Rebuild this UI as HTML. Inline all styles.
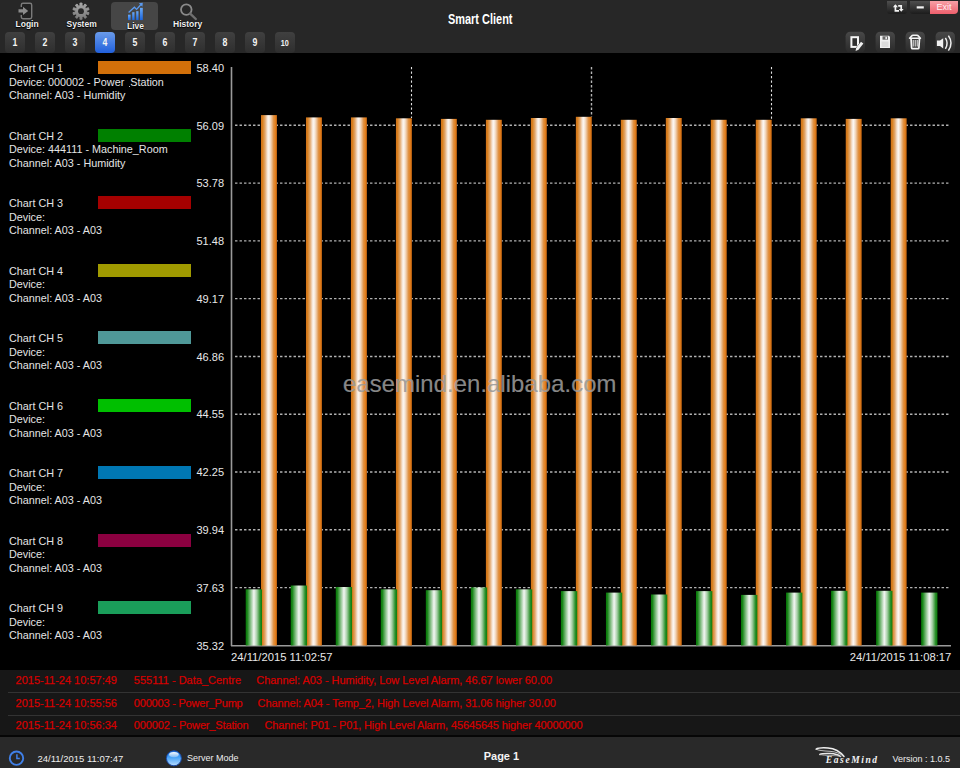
<!DOCTYPE html>
<html><head><meta charset="utf-8">
<style>
html,body{margin:0;padding:0;}
body{width:960px;height:768px;overflow:hidden;background:#000;position:relative;font-family:"Liberation Sans",sans-serif;color:#e6e6e6;}
.abs{position:absolute;}
#hdr{position:absolute;left:0;top:0;width:960px;height:52.6px;background:#272727;}
.tab{position:absolute;top:19px;font-size:8.5px;font-weight:bold;color:#f0f0f0;text-shadow:0 0 1px #000,0 1px 1px #000;white-space:nowrap;}
#livebg{position:absolute;left:111px;top:1.5px;width:47px;height:28px;background:#464646;border-radius:4px;}
.nb{position:absolute;top:32px;width:20px;height:20.5px;border-radius:4px;background:linear-gradient(#404040,#2e2e2e);color:#f4f4f4;font-size:10.3px;font-weight:bold;text-align:center;line-height:21.5px;}
.us{color:transparent;position:relative;}
.us::after{content:'';position:absolute;left:4.5px;top:10.3px;width:1.2px;height:1.2px;background:#bbb;}
.dg{display:inline-block;transform:scaleX(0.85);}
.nb.sel{background:linear-gradient(#6a9be9,#2160dc);}
#title{position:absolute;left:447.5px;top:10.4px;font-size:15.5px;font-weight:bold;color:#fff;transform:scaleX(0.706);transform-origin:0 0;white-space:nowrap;}
.sw{position:absolute;left:97.5px;width:93.5px;height:13.3px;}
.lt{position:absolute;left:9px;font-size:10.8px;line-height:13.5px;color:#e4e4e4;white-space:nowrap;}
#chart{position:absolute;left:0;top:0;}
#chart text{font-family:"Liberation Sans",sans-serif;font-size:11px;fill:#e8e8e8;}
.gd{stroke:#b4b4b4;stroke-width:1.4;stroke-dasharray:2.4 2.1;}
.gv{stroke:#e0e0e0;stroke-width:1.1;stroke-dasharray:2.2 2.3;}
#alarm{position:absolute;left:0;top:670px;width:960px;height:65px;background:#171717;}
.sep{position:absolute;left:8px;width:952px;height:1px;background:#333;}
.ar{position:absolute;font-size:11px;color:#dc0000;white-space:nowrap;-webkit-text-stroke:0.25px #c80000;}
#status{position:absolute;left:0;top:736.5px;width:960px;height:31px;background:#292929;}
#wm{position:absolute;left:343px;top:370.2px;font-size:24px;color:rgba(150,150,150,0.85);white-space:nowrap;text-shadow:-0.4px -0.4px 0 rgba(230,230,230,0.25);}
</style></head><body>
<div id="hdr"></div>
<div id="livebg"></div>
<svg class="abs" style="left:0;top:0" width="220" height="30">
  <defs>
    <linearGradient id="bl" x1="0" y1="0" x2="0" y2="1"><stop offset="0" stop-color="#6aaaf8"/><stop offset="1" stop-color="#1a66e0"/></linearGradient>
    <linearGradient id="gr" gradientUnits="userSpaceOnUse" x1="0" y1="-8" x2="0" y2="8"><stop offset="0" stop-color="#a8a8a8"/><stop offset="1" stop-color="#7a7a7a"/></linearGradient>
  </defs>
  <rect x="22" y="4" width="9" height="14" fill="#222"/><path d="M21.3 7 V5 Q21.3 3.3 23 3.3 H30 Q31.7 3.3 31.7 5 V17 Q31.7 18.7 30 18.7 H23 Q21.3 18.7 21.3 17 V15" fill="none" stroke="#7a7a7a" stroke-width="1.4"/>
  <path d="M18.5 9.3 H23 V6.8 L28.2 10.9 L23 15 V12.6 H18.5 Z" fill="#8c8c8c"/>
  <g transform="translate(81,11.2)">
    <g fill="url(#gr)">
    <path d="M-1.01 -5.51 L-1.08 -8.13 L1.08 -8.13 L1.01 -5.51 L2.42 -5.05 L3.91 -7.21 L5.65 -5.94 L4.06 -3.86 L4.92 -2.67 L7.40 -3.54 L8.06 -1.49 L5.55 -0.74 L5.55 0.74 L8.06 1.49 L7.40 3.54 L4.92 2.67 L4.06 3.86 L5.65 5.94 L3.91 7.21 L2.42 5.05 L1.01 5.51 L1.08 8.13 L-1.08 8.13 L-1.01 5.51 L-2.42 5.05 L-3.91 7.21 L-5.65 5.94 L-4.06 3.86 L-4.92 2.67 L-7.40 3.54 L-8.06 1.49 L-5.55 0.74 L-5.55 -0.74 L-8.06 -1.49 L-7.40 -3.54 L-4.92 -2.67 L-4.06 -3.86 L-5.65 -5.94 L-3.91 -7.21 L-2.42 -5.05 Z" stroke="url(#gr)" stroke-width="0.9" stroke-linejoin="round"/>
    </g>
    <circle r="2.9" fill="#2a2a2a"/>
  </g>
  <rect x="128" y="14.7" width="2.6" height="5.4" fill="url(#bl)"/>
  <rect x="132.2" y="12.2" width="2.3" height="7.9" fill="url(#bl)"/>
  <rect x="136.2" y="11.2" width="2.3" height="8.9" fill="url(#bl)"/>
  <rect x="140" y="7.8" width="2.8" height="12.3" fill="url(#bl)"/>
  <path d="M128.6 12.5 L134.4 7.2 L136.6 9.4 L141 4.5" fill="none" stroke="#5a9af0" stroke-width="1.3"/>
  <path d="M138.8 3.2 L142.8 2.8 L142.4 6.8 Z" fill="#5a9af0"/>
  <circle cx="186.3" cy="9.6" r="5.3" fill="none" stroke="#8a8a8a" stroke-width="1.8"/>
  <path d="M190.2 13.6 L195.8 19" stroke="#6f6f6f" stroke-width="2.4" stroke-linecap="round"/>
</svg>
<div class="tab" style="left:15.5px">Login</div>
<div class="tab" style="left:66.5px">System</div>
<div class="tab" style="left:127px;top:20.7px">Live</div>
<div class="tab" style="left:173px">History</div>
<div class="nb" style="left:5px"><span class="dg">1</span></div>
<div class="nb" style="left:35px"><span class="dg">2</span></div>
<div class="nb" style="left:65px"><span class="dg">3</span></div>
<div class="nb sel" style="left:95px"><span class="dg">4</span></div>
<div class="nb" style="left:125px"><span class="dg">5</span></div>
<div class="nb" style="left:155px"><span class="dg">6</span></div>
<div class="nb" style="left:185px"><span class="dg">7</span></div>
<div class="nb" style="left:215px"><span class="dg">8</span></div>
<div class="nb" style="left:245px"><span class="dg">9</span></div>
<div class="nb" style="left:275px"><span class="dg" style="font-size:8.5px">10</span></div>
<div id="title">Smart Client</div>
<div class="abs" style="left:887px;top:1px;width:20px;height:12.5px;background:linear-gradient(#4e4e4e,#1c1c1c);border-radius:0 0 3px 3px;"></div>
<div class="abs" style="left:910px;top:1px;width:20px;height:12.5px;background:linear-gradient(#4e4e4e,#1c1c1c);border-radius:0 0 0 3px;"></div>
<div class="abs" style="left:930px;top:1px;width:28px;height:13.2px;background:linear-gradient(#f7a0a6,#ee5f6c);border-radius:0 0 4px 0;color:#fff0f2;font-size:9px;line-height:13px;text-align:center;">Exit</div>
<svg class="abs" style="left:887px;top:1px" width="71" height="14">
  <path d="M8.4 4.3 V9.8 H12" fill="none" stroke="#f2f2f2" stroke-width="1.7"/>
  <path d="M5.9 6.3 L8.4 3.2 L10.9 6.3 Z" fill="#f2f2f2"/>
  <path d="M11.2 4.9 H14.2 V8.6" fill="none" stroke="#f2f2f2" stroke-width="1.7"/>
  <path d="M11.8 8 L14.2 10.8 L16.6 8 Z" fill="#f2f2f2"/>
  <rect x="29.7" y="5.3" width="7.1" height="2.2" fill="#f2f2f2"/>
</svg>
<svg class="abs" style="left:840px;top:28px" width="120" height="25">
  <defs><linearGradient id="tb" x1="0" y1="0" x2="0" y2="1"><stop offset="0" stop-color="#484848"/><stop offset="1" stop-color="#2a2a2a"/></linearGradient></defs>
  <rect x="5.6" y="3.75" width="19.4" height="20.8" rx="4.5" fill="url(#tb)"/>
  <rect x="35.6" y="3.75" width="19.4" height="20.8" rx="4.5" fill="url(#tb)"/>
  <rect x="65.6" y="3.75" width="19.4" height="20.8" rx="4.5" fill="url(#tb)"/>
  <rect x="95.6" y="3.75" width="19.4" height="20.8" rx="4.5" fill="url(#tb)"/>
  <rect x="11.4" y="9.2" width="6.6" height="9.7" fill="#2e2e2e" stroke="#f4f4f4" stroke-width="2"/>
  <path d="M21.0 13.8 L23.4 15.6 L18.5 21.8 L15.6 23.1 L16.1 20.0 Z" fill="#f0f0f0" stroke="#303030" stroke-width="0.9" paint-order="stroke"/>
  <path d="M40 7.8 H49 L50 8.8 V20 H40 Z" fill="#f0f0f0"/>
  <rect x="42.5" y="8.3" width="5.5" height="3.4" fill="#6a6a6a"/>
  <rect x="45.4" y="8.8" width="1.6" height="2.4" fill="#e8e8e8"/>
  <rect x="41.5" y="13.5" width="7" height="5.5" fill="#dcdcdc"/>
  <path d="M69.6 10.3 L71.6 8 Q72.1 7.3 73.1 7.3 H76.9 Q77.9 7.3 78.4 8 L80.4 10.3 Z" fill="none" stroke="#f4f4f4" stroke-width="1.6" stroke-linejoin="round"/>
  <path d="M71 10.5 L71.6 19.8 Q71.7 20.6 72.5 20.6 H78 Q78.8 20.6 78.9 19.8 L79.5 10.5" fill="none" stroke="#f4f4f4" stroke-width="1.7"/>
  <path d="M73.2 12 V18.6 M75.2 12 V18.6 M77.2 12 V18.6" stroke="#f0f0f0" stroke-width="1"/>
  <path d="M96.9 12.5 H100 L103.2 10.2 V20.4 L100 18.1 H96.9 Z" fill="#f0f0f0"/>
  <path d="M105.4 9.8 Q108.8 15.3 105.4 20.8" fill="none" stroke="#f0f0f0" stroke-width="1.5"/>
  <path d="M108.4 7.6 Q113.6 15 108.4 22.6" fill="none" stroke="#f0f0f0" stroke-width="1.5"/>
</svg>

<svg id="chart" width="960" height="670">
  <defs>
    <linearGradient id="gg" x1="0" y1="0" x2="1" y2="0">
      <stop offset="0" stop-color="#067806"/><stop offset="0.1" stop-color="#1a861a"/><stop offset="0.3" stop-color="#88c088"/><stop offset="0.5" stop-color="#f4f6f4"/><stop offset="0.68" stop-color="#a8d0a8"/><stop offset="0.88" stop-color="#2a902a"/><stop offset="1" stop-color="#0a7a0a"/>
    </linearGradient>
    <linearGradient id="og" x1="0" y1="0" x2="1" y2="0">
      <stop offset="0" stop-color="#d0701a"/><stop offset="0.1" stop-color="#d8801f"/><stop offset="0.25" stop-color="#e2a66a"/><stop offset="0.4" stop-color="#f6e6d8"/><stop offset="0.49" stop-color="#fcf7f2"/><stop offset="0.62" stop-color="#f0d2b6"/><stop offset="0.78" stop-color="#e09448"/><stop offset="0.9" stop-color="#e47f1c"/><stop offset="1" stop-color="#b05a10"/>
    </linearGradient>
  </defs>
<text x="224" y="71.7" text-anchor="end">58.40</text>
<text x="224" y="129.5" text-anchor="end">56.09</text>
<line x1="235.05" y1="125.29" x2="949.5" y2="125.29" class="gd"/>
<text x="224" y="187.3" text-anchor="end">53.78</text>
<line x1="235.05" y1="183.08" x2="949.5" y2="183.08" class="gd"/>
<text x="224" y="245.1" text-anchor="end">51.48</text>
<line x1="235.05" y1="240.87" x2="949.5" y2="240.87" class="gd"/>
<text x="224" y="302.9" text-anchor="end">49.17</text>
<line x1="235.05" y1="298.66" x2="949.5" y2="298.66" class="gd"/>
<text x="224" y="360.6" text-anchor="end">46.86</text>
<line x1="235.05" y1="356.45" x2="949.5" y2="356.45" class="gd"/>
<text x="224" y="418.4" text-anchor="end">44.55</text>
<line x1="235.05" y1="414.24" x2="949.5" y2="414.24" class="gd"/>
<text x="224" y="476.2" text-anchor="end">42.25</text>
<line x1="235.05" y1="472.03" x2="949.5" y2="472.03" class="gd"/>
<text x="224" y="534.0" text-anchor="end">39.94</text>
<line x1="235.05" y1="529.82" x2="949.5" y2="529.82" class="gd"/>
<text x="224" y="591.8" text-anchor="end">37.63</text>
<line x1="235.05" y1="587.61" x2="949.5" y2="587.61" class="gd"/>
<text x="224" y="649.6" text-anchor="end">35.32</text>
  <line x1="231.5" y1="67" x2="231.5" y2="646" stroke="#9a9a9a" stroke-width="1.6"/>
  <line x1="231" y1="645.8" x2="951" y2="645.8" stroke="#9a9a9a" stroke-width="1.6"/>
  <line x1="411.5" y1="67" x2="411.5" y2="118" class="gv"/>
  <line x1="591.5" y1="67" x2="591.5" y2="117" class="gd"/>
  <line x1="771.5" y1="67" x2="771.5" y2="120" class="gv"/>
<rect x="261.00" y="115.1" width="16" height="530.4" fill="url(#og)"/>
<rect x="305.98" y="117.4" width="16" height="528.1" fill="url(#og)"/>
<rect x="350.96" y="117.4" width="16" height="528.1" fill="url(#og)"/>
<rect x="395.94" y="118.3" width="16" height="527.2" fill="url(#og)"/>
<rect x="440.92" y="118.9" width="16" height="526.6" fill="url(#og)"/>
<rect x="485.90" y="119.8" width="16" height="525.7" fill="url(#og)"/>
<rect x="530.88" y="118.0" width="16" height="527.5" fill="url(#og)"/>
<rect x="575.86" y="116.8" width="16" height="528.7" fill="url(#og)"/>
<rect x="620.84" y="119.8" width="16" height="525.7" fill="url(#og)"/>
<rect x="665.82" y="118.0" width="16" height="527.5" fill="url(#og)"/>
<rect x="710.80" y="119.8" width="16" height="525.7" fill="url(#og)"/>
<rect x="755.78" y="119.8" width="16" height="525.7" fill="url(#og)"/>
<rect x="800.76" y="118.3" width="16" height="527.2" fill="url(#og)"/>
<rect x="845.74" y="118.9" width="16" height="526.6" fill="url(#og)"/>
<rect x="890.72" y="118.3" width="16" height="527.2" fill="url(#og)"/>
<rect x="245.70" y="589.3" width="16.3" height="56.2" fill="url(#gg)"/>
<rect x="290.73" y="585.5" width="16.3" height="60.0" fill="url(#gg)"/>
<rect x="335.76" y="587.0" width="16.3" height="58.5" fill="url(#gg)"/>
<rect x="380.79" y="589.3" width="16.3" height="56.2" fill="url(#gg)"/>
<rect x="425.82" y="590.2" width="16.3" height="55.3" fill="url(#gg)"/>
<rect x="470.85" y="587.4" width="16.3" height="58.1" fill="url(#gg)"/>
<rect x="515.88" y="589.3" width="16.3" height="56.2" fill="url(#gg)"/>
<rect x="560.91" y="591.1" width="16.3" height="54.4" fill="url(#gg)"/>
<rect x="605.94" y="592.6" width="16.3" height="52.9" fill="url(#gg)"/>
<rect x="650.97" y="594.5" width="16.3" height="51.0" fill="url(#gg)"/>
<rect x="696.00" y="591.1" width="16.3" height="54.4" fill="url(#gg)"/>
<rect x="741.03" y="594.9" width="16.3" height="50.6" fill="url(#gg)"/>
<rect x="786.06" y="592.6" width="16.3" height="52.9" fill="url(#gg)"/>
<rect x="831.09" y="590.8" width="16.3" height="54.7" fill="url(#gg)"/>
<rect x="876.12" y="590.8" width="16.3" height="54.7" fill="url(#gg)"/>
<rect x="921.15" y="592.6" width="16.3" height="52.9" fill="url(#gg)"/>
  <text x="231" y="660.7" style="font-size:11.25px">24/11/2015 11:02:57</text>
  <text x="951.3" y="660.7" text-anchor="end" style="font-size:11.25px">24/11/2015 11:08:17</text>
</svg>
<div class="sw" style="top:61.0px;background:#d2700a"></div>
<div class="lt" style="top:62.0px">Chart CH 1<br>Device: 000002 - Power<span class="us">_</span>Station<br>Channel: A03 - Humidity</div>
<div class="sw" style="top:128.5px;background:#008000"></div>
<div class="lt" style="top:129.5px">Chart CH 2<br>Device: 444111 - Machine_Room<br>Channel: A03 - Humidity</div>
<div class="sw" style="top:196.0px;background:#a50000"></div>
<div class="lt" style="top:197.0px">Chart CH 3<br>Device:<br>Channel: A03 - A03</div>
<div class="sw" style="top:263.5px;background:#a09a00"></div>
<div class="lt" style="top:264.5px">Chart CH 4<br>Device:<br>Channel: A03 - A03</div>
<div class="sw" style="top:331.0px;background:#4f9898"></div>
<div class="lt" style="top:332.0px">Chart CH 5<br>Device:<br>Channel: A03 - A03</div>
<div class="sw" style="top:398.5px;background:#00bf00"></div>
<div class="lt" style="top:399.5px">Chart CH 6<br>Device:<br>Channel: A03 - A03</div>
<div class="sw" style="top:466.0px;background:#0077b3"></div>
<div class="lt" style="top:467.0px">Chart CH 7<br>Device:<br>Channel: A03 - A03</div>
<div class="sw" style="top:533.5px;background:#8b0040"></div>
<div class="lt" style="top:534.5px">Chart CH 8<br>Device:<br>Channel: A03 - A03</div>
<div class="sw" style="top:601.0px;background:#1a9e5a"></div>
<div class="lt" style="top:602.0px">Chart CH 9<br>Device:<br>Channel: A03 - A03</div>
<div id="wm">easemind.en.alibaba.com</div>

<div id="alarm">
  <div class="sep" style="top:22px"></div>
  <div class="sep" style="top:45px"></div>
  <div class="ar" style="top:4px;left:15.6px">2015-11-24 10:57:49</div>
  <div class="ar" style="top:4px;left:133.8px">555111 - Data_Centre</div>
  <div class="ar" style="top:4px;left:256.3px;letter-spacing:-0.04px">Channel: A03 - Humidity, Low Level Alarm, 46.67 lower 60.00</div>
  <div class="ar" style="top:26.5px;left:15.6px">2015-11-24 10:55:56</div>
  <div class="ar" style="top:26.5px;left:133.8px;letter-spacing:-0.2px">000003 - Power_Pump</div>
  <div class="ar" style="top:26.5px;left:257.5px;letter-spacing:-0.06px">Channel: A04 - Temp_2, High Level Alarm, 31.06 higher 30.00</div>
  <div class="ar" style="top:49px;left:15.6px">2015-11-24 10:56:34</div>
  <div class="ar" style="top:49px;left:133.8px;letter-spacing:-0.15px">000002 - Power_Station</div>
  <div class="ar" style="top:49px;left:264.5px;letter-spacing:-0.13px">Channel: P01 - P01, High Level Alarm, 45645645 higher 40000000</div>
</div>
<div class="abs" style="left:0;top:735px;width:960px;height:1.5px;background:#060606"></div>
<div id="status"></div>
<svg class="abs" style="left:0;top:737px" width="200" height="31">
  <defs><linearGradient id="sph" x1="0" y1="0" x2="0" y2="1"><stop offset="0" stop-color="#1a78e8"/><stop offset="0.45" stop-color="#4aa4f8"/><stop offset="1" stop-color="#b8dcfc"/></linearGradient><linearGradient id="hl" x1="0" y1="0" x2="0" y2="1"><stop offset="0" stop-color="#ffffff"/><stop offset="1" stop-color="#ffffff" stop-opacity="0.3"/></linearGradient></defs>
  <circle cx="16.5" cy="21.2" r="6.7" fill="none" stroke="#4080e8" stroke-width="1.9"/>
  <path d="M16.9 17.3 V21.5 H19.8" fill="none" stroke="#4080e8" stroke-width="1.5"/>
  <circle cx="173.9" cy="21.3" r="7.5" fill="url(#sph)" stroke="#1a4aa8" stroke-width="1"/><ellipse cx="173.9" cy="17.6" rx="4.8" ry="2.6" fill="url(#hl)"/>
</svg>
<div class="abs" style="left:37.5px;top:753px;font-size:9.5px;color:#eee;white-space:nowrap">24/11/2015 11:07:47</div>
<div class="abs" style="left:187px;top:753px;font-size:9px;color:#eee;white-space:nowrap">Server Mode</div>
<div class="abs" style="left:483.7px;top:750.2px;font-size:11px;font-weight:bold;color:#f4f4f4;white-space:nowrap">Page 1</div>
<svg class="abs" style="left:810px;top:740px" width="80" height="28">
  <path d="M6.2 9.2 Q8.5 7.4 18 8 Q28 8.8 34 16.5" fill="none" stroke="#f0f0f0" stroke-width="1.5" stroke-linecap="round"/>
  <path d="M6.2 9.2 Q9 10.8 20 11.3 Q29 12 33.6 16.5" fill="none" stroke="#cfcfcf" stroke-width="0.9"/>
  <path d="M9.8 14.5 Q12 13.3 20.5 13.6 Q27 14 30.6 16.5" fill="none" stroke="#e8e8e8" stroke-width="1.5" stroke-linecap="round"/>
  <path d="M9.8 14.5 Q13 15.5 22 15.5 Q27 15.6 30.6 16.5" fill="none" stroke="#bdbdbd" stroke-width="0.8"/>
</svg>
<div class="abs" style="left:825.8px;top:755.1px;font-size:9.5px;font-style:italic;font-weight:bold;color:#f2f2f2;font-family:'Liberation Serif',serif;white-space:nowrap;letter-spacing:1.6px">EaseMind</div>
<div class="abs" style="left:892.5px;top:753.5px;font-size:9px;color:#eee;white-space:nowrap">Version : 1.0.5</div>
</body></html>
